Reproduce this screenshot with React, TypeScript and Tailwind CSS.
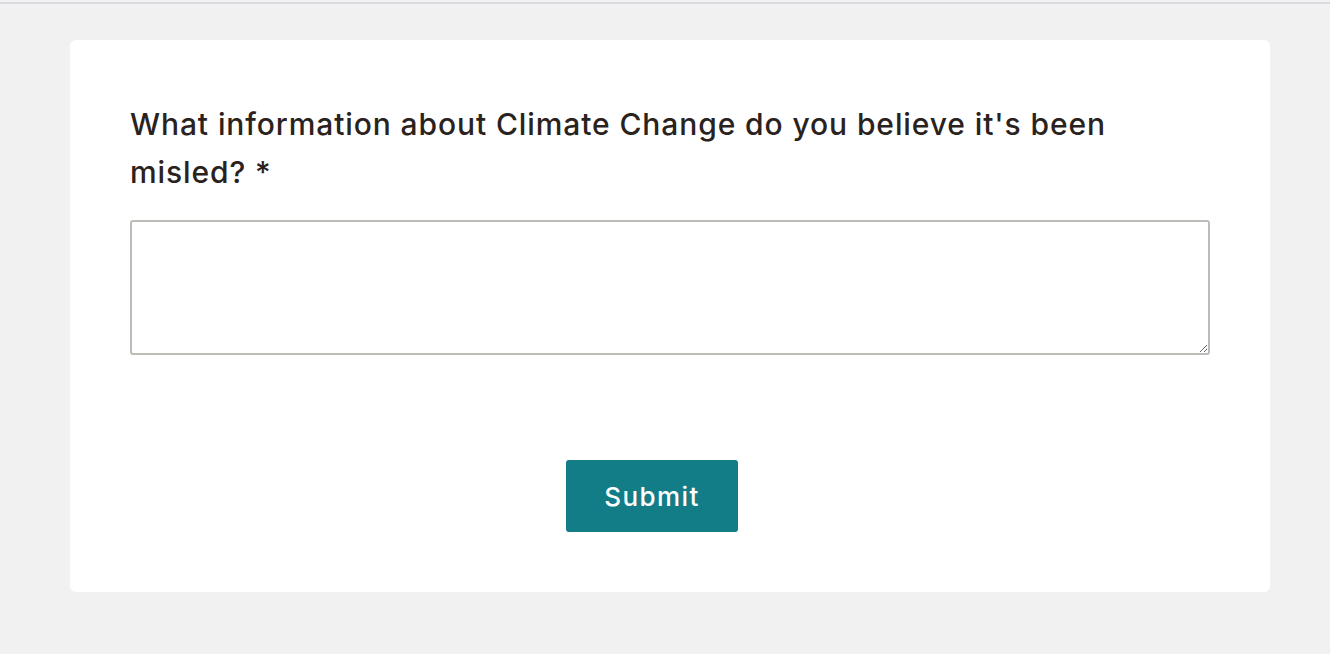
import React from "react";

const App: React.FC = () => {
  return (
    <div className="min-h-[654px] w-full bg-[#f1f1f1] pt-[2px] font-['Inter',sans-serif]">
      <div className="h-[2px] bg-[#dddbe2]" />
      <div className="pt-[36px] pb-[60px]">
        <div className="ml-[70px] w-[1200px] bg-white rounded-[6px] px-[60px] pt-[60px] pb-[60px]">
          <h2 className="text-[30px] leading-[48px] font-medium text-[#2a221d] tracking-[0.9px]">
            What information about Climate Change do you believe it's been
            misled? *
          </h2>
          <textarea
            className="mt-[24px] block w-full h-[135px] border-2 border-[#bfbcb8] rounded-[3px] bg-white outline-none p-2 text-[18px]"
            aria-label="answer"
          />
          <div className="flex justify-center pr-[36px] mt-[105px]">
            <button className="w-[172px] h-[72px] bg-[#127d86] text-white text-[26px] font-medium tracking-[1.4px] rounded-[3px]">
              Submit
            </button>
          </div>
        </div>
      </div>
    </div>
  );
};

export default App;
